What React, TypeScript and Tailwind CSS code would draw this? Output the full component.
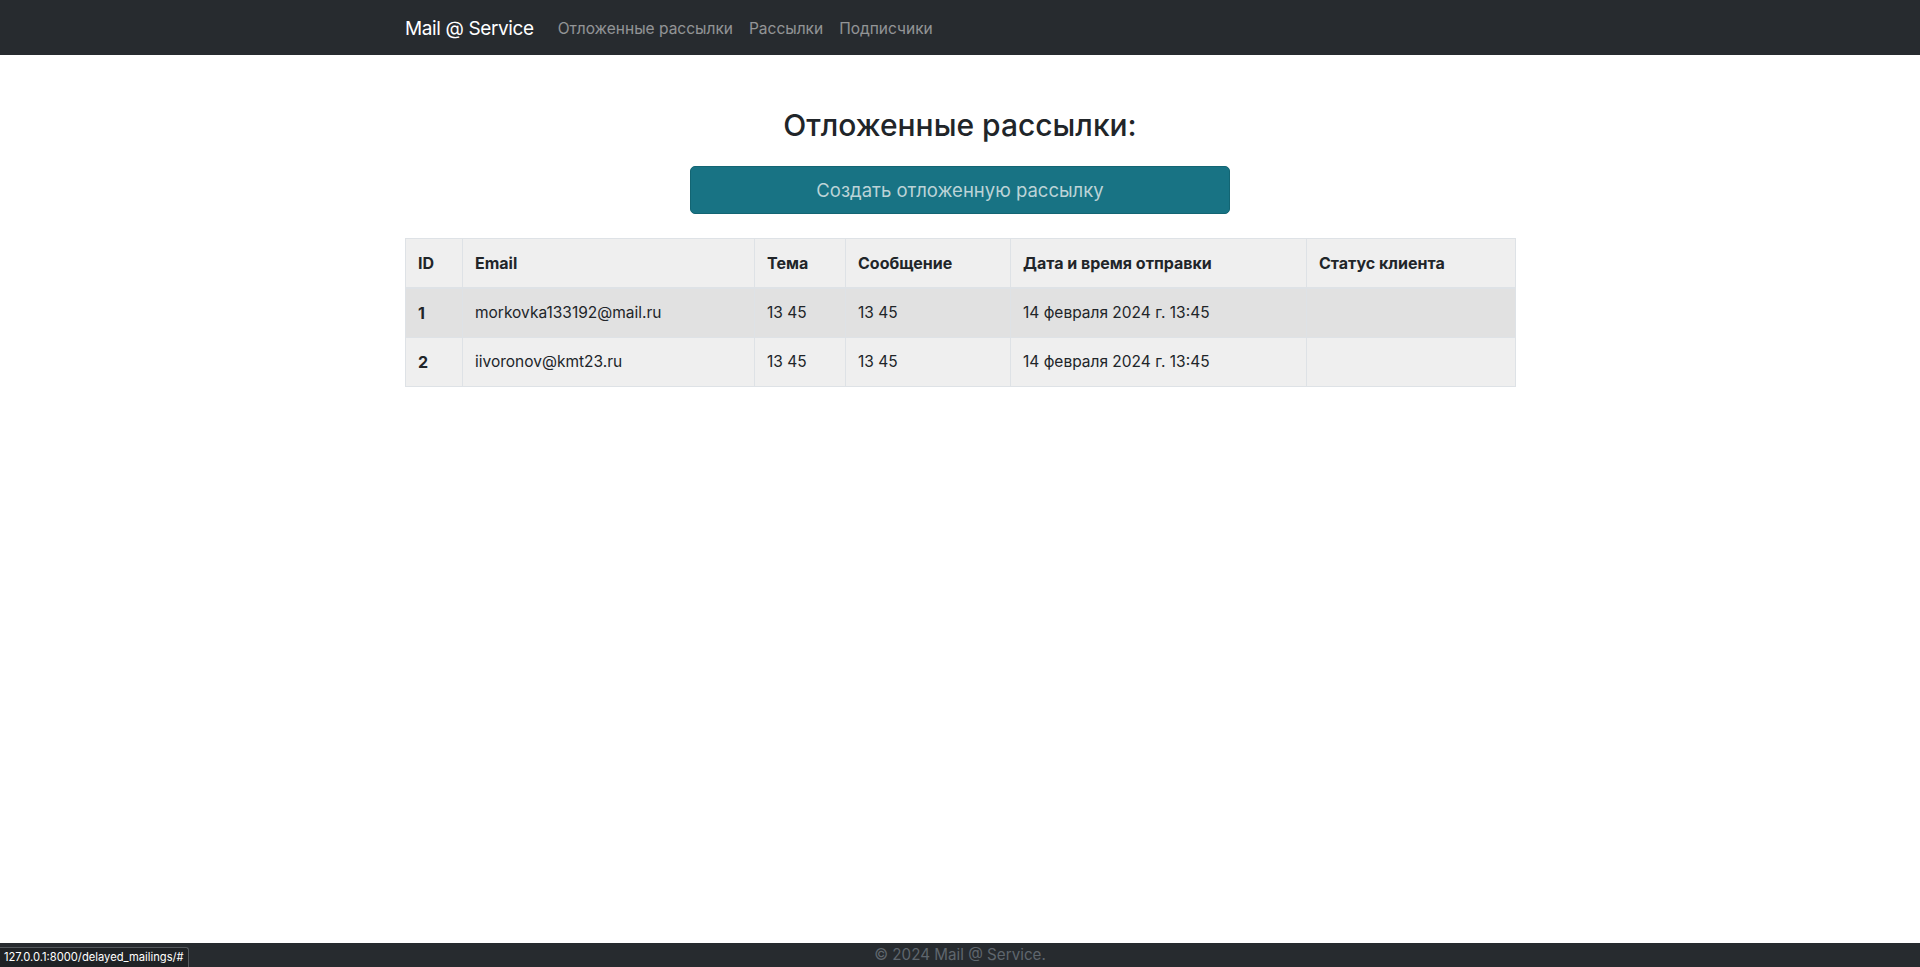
const ROWS = [
  { id: 1, email: "morkovka133192@mail.ru", subject: "13 45", message: "13 45", date: "14 февраля 2024 г. 13:45", status: "" },
  { id: 2, email: "iivoronov@kmt23.ru", subject: "13 45", message: "13 45", date: "14 февраля 2024 г. 13:45", status: "" },
];

const COLS = [
  { title: "ID", w: "w-[57px]" },
  { title: "Email", w: "w-[292px]" },
  { title: "Тема", w: "w-[91px]" },
  { title: "Сообщение", w: "w-[165px]" },
  { title: "Дата и время отправки", w: "w-[296px]" },
  { title: "Статус клиента", w: "w-[209px]" },
];

export default function App() {
  return (
    <div className="relative flex h-screen flex-col bg-white font-['Inter','Liberation_Sans',sans-serif] text-[#212529]">
      <nav className="h-[55px] shrink-0 bg-[#272b2f]">
        <div className="mx-auto flex h-full w-[1110px] items-center pt-[2px]">
          <a href="#" className="mr-4 text-[19px] leading-[30px] tracking-[-0.02em] text-white">
            Mail @ Service
          </a>
          <div className="flex">
            {["Отложенные рассылки", "Рассылки", "Подписчики"].map((l) => (
              <a key={l} href="#" className="px-2 text-[15.5px] leading-6 text-white/50">
                {l}
              </a>
            ))}
          </div>
        </div>
      </nav>

      <main className="flex-1">
        <div className="mx-auto w-[1110px] pt-[51px]">
          <h2 className="text-center text-[30px] font-medium leading-[38px]">Отложенные рассылки:</h2>
          <div className="mt-[22px] flex justify-center">
            <button className="h-12 w-[540px] rounded-[5px] border border-[#136573] bg-[#187384] pt-[2px] text-[18.5px] text-[#bcd3d7]">
              Создать отложенную рассылку
            </button>
          </div>

          <table className="mt-6 w-full table-fixed border-collapse border border-[#dee2e6] leading-6">
            <thead>
              <tr className="bg-[#efefef]">
                {COLS.map((c) => (
                  <th
                    key={c.title}
                    className={`${c.w} border border-b-2 border-[#dee2e6] px-3 py-3 text-left text-[16px] font-bold`}
                  >
                    {c.title}
                  </th>
                ))}
              </tr>
            </thead>
            <tbody>
              {ROWS.map((r, i) => (
                <tr key={r.id} className={i % 2 === 0 ? "bg-[#e1e1e1]" : "bg-[#efefef]"}>
                  <td className="border border-[#dee2e6] px-3 py-3 text-[16px] font-bold">{r.id}</td>
                  <td className="border border-[#dee2e6] px-3 py-3 text-[15.5px]">{r.email}</td>
                  <td className="border border-[#dee2e6] px-3 py-3 text-[15.5px]">{r.subject}</td>
                  <td className="border border-[#dee2e6] px-3 py-3 text-[15.5px]">{r.message}</td>
                  <td className="border border-[#dee2e6] px-3 py-3 text-[15.5px]">{r.date}</td>
                  <td className="border border-[#dee2e6] px-3 py-3 text-[15.5px]">{r.status}</td>
                </tr>
              ))}
            </tbody>
          </table>
        </div>
      </main>

      <footer className="h-6 shrink-0 overflow-hidden bg-[#272b2f] text-center text-[15.2px] leading-6 text-[#5f666d]">
        © 2024 Mail @ Service.
      </footer>

      <div className="absolute bottom-0 left-0 rounded-tr-[3px] border border-b-0 border-l-0 border-[#55595d] bg-[#1f2225] px-1 text-[11.2px] leading-[19px] text-white">
        127.0.0.1:8000/delayed_mailings/#
      </div>
    </div>
  );
}
